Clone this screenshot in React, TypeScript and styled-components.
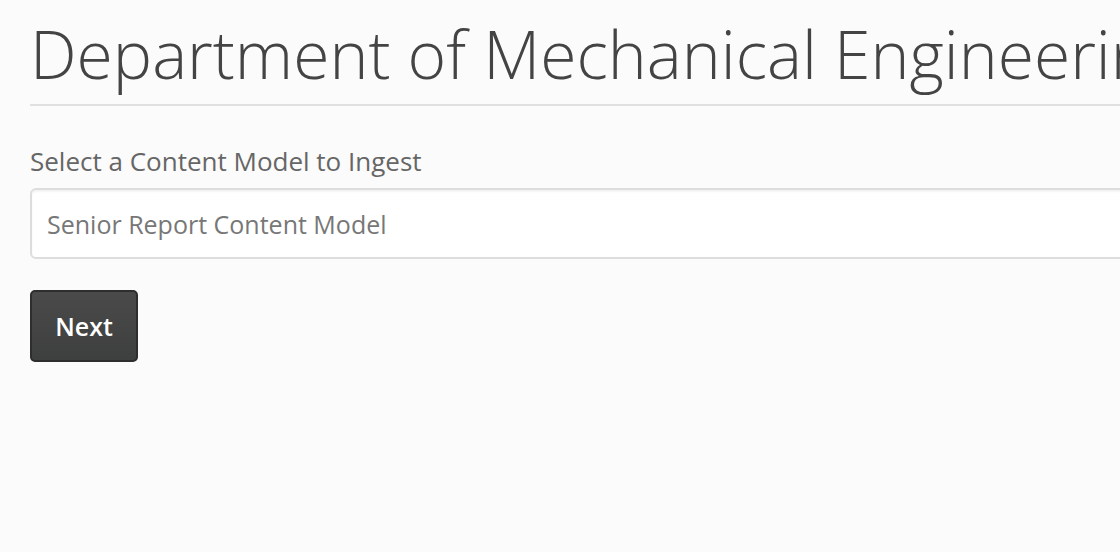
import React from "react";
import styled, { createGlobalStyle } from "styled-components";

const Global = createGlobalStyle`
  html, body { margin: 0; padding: 0; background: #fbfbfb; overflow: hidden; }
  body { font-family: "Open Sans", "Liberation Sans", sans-serif; }
`;

const Page = styled.main`
  width: 1500px;
  padding: 0 30px;
  box-sizing: border-box;
`;

const Title = styled.h1`
  margin: 0;
  padding: 13px 0 11px 0;
  font-weight: 300;
  font-size: 66px;
  line-height: 80px;
  color: #444;
  white-space: nowrap;
  border-bottom: 2px solid #e0e0e0;
`;

const Form = styled.form`
  display: flex;
  flex-direction: column;
  align-items: flex-start;
  padding-top: 40px;
`;

const Label = styled.label`
  font-size: 26px;
  line-height: 30px;
  color: #666;
  margin-bottom: 12px;
  white-space: nowrap;
`;

const Select = styled.div`
  width: 100%;
  box-sizing: border-box;
  height: 71px;
  border: 2px solid #ddd;
  border-radius: 6px;
  background: #fff;
  box-shadow: inset 0 2px 2px rgba(0,0,0,0.05);
  display: flex;
  align-items: center;
  padding: 0 15px;
  font-size: 25px;
  font-weight: 400;
  color: #777;
  white-space: nowrap;
`;

const Button = styled.button`
  margin-top: 31px;
  width: 108px;
  height: 72px;
  border: 2px solid #2e2e2e;
  border-radius: 5px;
  background: linear-gradient(#4a4a4a, #3e3f3f);
  color: #fff;
  font-family: "Open Sans", "Liberation Sans", sans-serif;
  font-size: 25px;
  font-weight: 600;
  cursor: pointer;
`;

export default function App() {
  return (
    <>
      <Global />
      <Page>
        <Title>Department of Mechanical Engineering</Title>
        <Form>
          <Label>Select a Content Model to Ingest</Label>
          <Select>Senior Report Content Model</Select>
          <Button type="button">Next</Button>
        </Form>
      </Page>
    </>
  );
}
